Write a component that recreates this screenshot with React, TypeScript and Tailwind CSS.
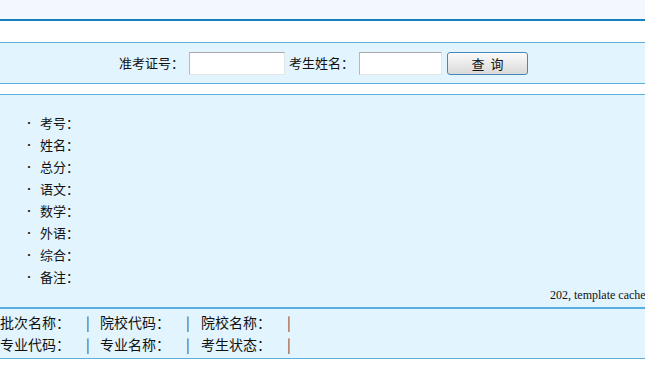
const cjk = "font-['SimSun','Noto_Sans_CJK_SC',sans-serif]";

const fields = ['考号', '姓名', '总分', '语文', '数学', '外语', '综合', '备注'];

const footerRows = [
  ['批次名称', '院校代码', '院校名称'],
  ['专业代码', '专业名称', '考生状态'],
];

export default function App() {
  return (
    <div className={`w-[645px] h-[372px] bg-white text-[#111] ${cjk}`}>
      {/* top strip */}
      <div className="h-[19px] bg-[#f2f8fd]" />
      <div className="h-[2px] bg-[#1680c0]" />
      <div className="h-[21px] bg-white" />

      {/* search form */}
      <div className="h-[42px] border-y border-[#5cb2dc] bg-[#e2f4fe] flex items-center justify-center pl-[2px] text-[13px]">
        <span className="mr-[5px]">准考证号：</span>
        <input className="w-[96px] h-[23px] bg-white border border-t-[#a8a8a8] border-l-[#b8b8b8] border-r-[#e4e4e4] border-b-[#e4e4e4] outline-none" />
        <span className="ml-[4px] mr-[5px]">考生姓名：</span>
        <input className="w-[83px] h-[23px] bg-white border border-t-[#a8a8a8] border-l-[#b8b8b8] border-r-[#e4e4e4] border-b-[#e4e4e4] outline-none" />
        <button className="ml-[5px] w-[81px] h-[23px] rounded-[3px] border border-[#4a86b4] bg-gradient-to-b from-[#fbfbfb] to-[#d9d9d9] text-[13px] leading-none tracking-[6px] pl-[6px]">
          查询
        </button>
      </div>

      <div className="h-[10px] bg-white" />

      {/* results */}
      <div className="h-[213px] border-t border-[#5cb2dc] bg-[#e2f4fe] flex flex-col pt-[17px] overflow-hidden">
        <ul className="pl-[24px] text-[13px]">
          {fields.map((f) => (
            <li key={f} className="h-[22px] flex items-center">
              <span className="w-[16px] text-[10px] leading-none">•</span>
              <span>{f}：</span>
            </li>
          ))}
        </ul>
        <div className="pl-[550px] whitespace-nowrap text-[12px] leading-none mt-[1px] font-['Liberation_Serif',serif]">
          202, template cached
        </div>
      </div>

      {/* footer */}
      <div className="h-[52px] border-t-2 border-b border-t-[#5aaee0] border-b-[#5cb2dc] bg-[#e2f4fe] pt-[2px] text-[14px]">
        {footerRows.map((row, i) => (
          <div key={i} className="h-[22px] flex items-center">
            {row.map((label, j) => (
              <div key={label} className={`flex ${j === 1 ? 'w-[101px]' : 'w-[100px]'}`}>
                <span className="w-[86px]">{label}：</span>
                <span className="text-[#444]">|</span>
              </div>
            ))}
          </div>
        ))}
      </div>
    </div>
  );
}
